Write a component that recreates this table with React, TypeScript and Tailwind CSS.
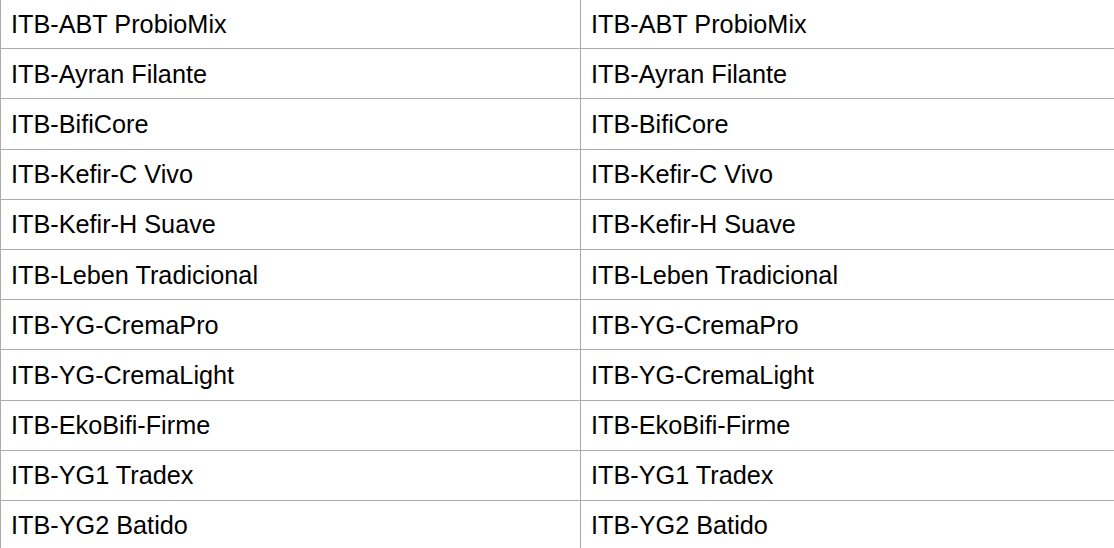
const products = [
  'ITB-ABT ProbioMix',
  'ITB-Ayran Filante',
  'ITB-BifiCore',
  'ITB-Kefir-C Vivo',
  'ITB-Kefir-H Suave',
  'ITB-Leben Tradicional',
  'ITB-YG-CremaPro',
  'ITB-YG-CremaLight',
  'ITB-EkoBifi-Firme',
  'ITB-YG1 Tradex',
  'ITB-YG2 Batido',
]

export default function App() {
  return (
    <div
      className="w-[1114px] h-[548px] overflow-hidden bg-white text-black text-[25.25px]"
      style={{ fontFamily: '"Liberation Sans", Arial, sans-serif' }}
    >
      <div className="-mt-[2px]">
        {products.map((name) => (
          <div key={name} className="grid grid-cols-[580px_1fr] h-[50.2px] border-t border-[#ababab]">
            <div className="flex items-center pl-[10px] pt-[1px] border-l border-[#ababab] leading-[25px]">
              {name}
            </div>
            <div className="flex items-center pl-[10px] pt-[1px] border-l border-[#ababab] leading-[25px]">
              {name}
            </div>
          </div>
        ))}
      </div>
    </div>
  )
}
